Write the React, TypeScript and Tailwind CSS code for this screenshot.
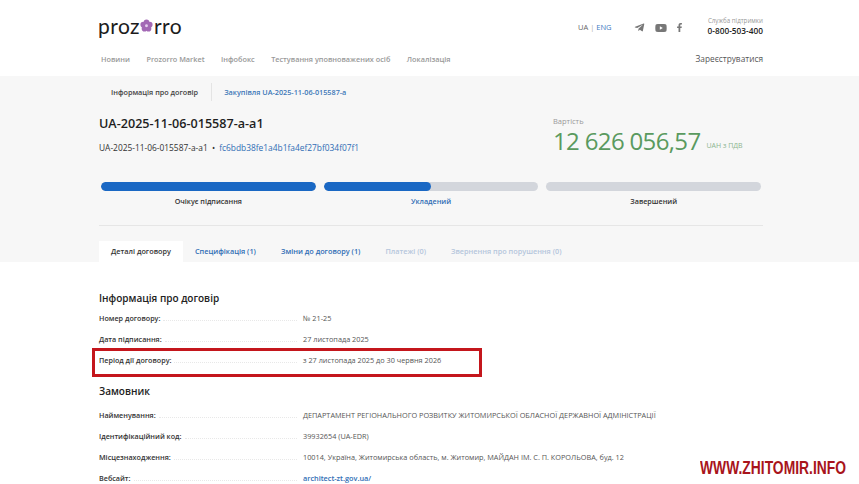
import { FaTelegramPlane, FaYoutube, FaFacebookF } from "react-icons/fa";

const navItems = ["Новини", "Prozorro Market", "Інфобокс", "Тестування уповноважених осіб", "Локалізація"];

const tabs = [
  { label: "Специфікація (1)", cls: "text-[#2f6db5]" },
  { label: "Зміни до договору (1)", cls: "text-[#2f6db5]" },
  { label: "Платежі (0)", cls: "text-[#b5c6dc]" },
  { label: "Звернення про порушення (0)", cls: "text-[#b5c6dc]" },
];

const stages = [
  { label: "Очікує підписання", fill: "w-full", cls: "text-[#333]" },
  { label: "Укладений", fill: "w-1/2", cls: "text-[#2f6db5]" },
  { label: "Завершений", fill: "w-0", cls: "text-[#333]" },
];

function Row({ label, value, link }: { label: string; value: string; link?: boolean }) {
  return (
    <div className="flex h-[21px] items-center">
      <div className="flex w-[204px] items-center pr-[6px] text-[7.2px]">
        <span className="whitespace-nowrap font-semibold text-[#333]">{label}</span>
        <span className="ml-[3px] mt-[5px] flex-1 border-b border-dotted border-[#e8e8e8]" />
      </div>
      <span className={link ? "text-[7.3px] font-semibold text-[#2f6db5]" : "whitespace-nowrap text-[7.3px] text-[#555]"}>{value}</span>
    </div>
  );
}

function Flower() {
  return (
    <svg width="13" height="13" viewBox="0 0 24 24" className="mx-[0.5px]">
      <g fill="#a368b5">
        <circle cx="12" cy="6" r="5.2" />
        <circle cx="18" cy="10.5" r="5.2" />
        <circle cx="15.7" cy="18" r="5.2" />
        <circle cx="8.3" cy="18" r="5.2" />
        <circle cx="6" cy="10.5" r="5.2" />
      </g>
      <circle cx="12" cy="12.5" r="2.6" fill="#e6cfee" />
    </svg>
  );
}

export default function App() {
  return (
    <div className="relative h-[484px] w-[859px] overflow-hidden bg-white font-['Open_Sans','Noto_Sans',sans-serif]">
      {/* шапка */}
      <header className="h-[76px] px-[96px]">
        <div className="flex h-[53px] items-center justify-between">
          <div className="flex items-center pl-[2px] pb-[3px] text-[21px] leading-none tracking-[0.45px] text-[#1c1c1c] font-['Lato','Open_Sans',sans-serif]">
            <span>proz</span>
            <Flower />
            <span>rro</span>
          </div>
          <div className="flex items-center">
            <div className="mt-[2px] w-[56px] whitespace-nowrap text-[7.5px] text-[#666]">
              UA <span className="text-[#aaa]">|</span> <span className="text-[#3f7cc4]">ENG</span>
            </div>
            <div className="mt-[2px] flex w-[73px] items-center text-[#777]">
              <FaTelegramPlane size={11} />
              <FaYoutube size={12} className="ml-[10px]" />
              <FaFacebookF size={9} className="ml-[8px]" />
            </div>
            <div className="w-[56px] whitespace-nowrap text-right">
              <div className="text-[6.2px] leading-[8px] text-[#999]">Служба підтримки</div>
              <div className="text-[8.3px] font-semibold leading-[11px] text-[#222]">0-800-503-400</div>
            </div>
          </div>
        </div>
        <div className="flex items-center justify-between">
          <nav className="flex gap-[16.5px] pl-[5px] text-[7.3px] font-semibold text-[#999]">
            {navItems.map((n) => (
              <span key={n} className="whitespace-nowrap">{n}</span>
            ))}
          </nav>
          <span className="text-[8.3px] text-[#555]">Зареєструватися</span>
        </div>
      </header>

      {/* верхня сіра секція */}
      <section className="h-[186px] bg-[#f7f7f7] pl-[99px] pr-[96px]">
        <div className="flex h-[32px] items-center text-[7.25px] font-semibold">
          <span className="pl-[12px] text-[#444]">Інформація про договір</span>
          <span className="ml-[13px] h-[18px] w-px bg-[#e4e4e4]" />
          <span className="ml-[12px] text-[#3d78b8]">Закупівля UA-2025-11-06-015587-a</span>
        </div>
        <div className="flex">
          <div className="w-[454px]">
            <h1 className="mt-[7px] text-[12.6px] font-semibold leading-[18px] text-[#1f1f1f]">UA-2025-11-06-015587-a-a1</h1>
            <p className="mt-[9px] whitespace-nowrap text-[8.4px] leading-[12px] text-[#333]">
              UA-2025-11-06-015587-a-a1 <span className="mx-[2px]">•</span>{" "}
              <span className="text-[#2f6db5]">fc6bdb38fe1a4b1fa4ef27bf034f07f1</span>
            </p>
          </div>
          <div className="whitespace-nowrap">
            <div className="mt-[8px] text-[7.5px] leading-[10px] text-[#999]">Вартість</div>
            <div className="flex items-end">
              <span className="text-[24px] leading-[30px] tracking-[-0.65px] text-[#5a9a5f]">12 626 056,57</span>
              <span className="mb-[5px] ml-[6px] text-[7px] leading-[10px] text-[#8cb58f]">UAH з ПДВ</span>
            </div>
          </div>
        </div>
        <div className="mt-[26px] grid grid-cols-3 gap-[8px] px-[2px]">
          {stages.map((s) => (
            <div key={s.label} className="flex flex-col items-center">
              <div className="h-[9px] w-full overflow-hidden rounded-full bg-[#d3d6dc]">
                <div className={`h-full rounded-full bg-[#1a68c4] ${s.fill}`} />
              </div>
              <span className={`mt-[4px] text-[7.2px] font-semibold leading-[12px] ${s.cls}`}>{s.label}</span>
            </div>
          ))}
        </div>
        <div className="mt-[18px] h-px bg-[#e6e6e6]" />
        <div className="mt-[15px] flex items-stretch text-[7.3px] font-semibold">
          <div className="flex h-[21px] w-[84px] items-center justify-center bg-white text-[#333]">Деталі договору</div>
          {tabs.map((t, i) => (
            <div key={t.label} className={`flex h-[21px] items-center whitespace-nowrap ${i === 0 ? "ml-[12px]" : "ml-[25px]"} ${t.cls}`}>
              {t.label}
            </div>
          ))}
        </div>
      </section>

      {/* деталі */}
      <section className="px-[99px]">
        <h2 className="mt-[29px] text-[10px] font-semibold leading-[14px] text-[#222]">Інформація про договір</h2>
        <div className="mt-[3px]">
          <Row label="Номер договору:" value="№ 21-25" />
          <Row label="Дата підписання:" value="27 листопада 2025" />
          <Row label="Період дії договору:" value="з 27 листопада 2025 до 30 червня 2026" />
        </div>
        <h2 className="mt-[13px] text-[10px] font-semibold leading-[14px] text-[#222]">Замовник</h2>
        <div className="mt-[7px]">
          <Row label="Найменування:" value="ДЕПАРТАМЕНТ РЕГІОНАЛЬНОГО РОЗВИТКУ ЖИТОМИРСЬКОЇ ОБЛАСНОЇ ДЕРЖАВНОЇ АДМІНІСТРАЦІЇ" />
          <Row label="Ідентифікаційний код:" value="39932654 (UA-EDR)" />
          <Row label="Місцезнаходження:" value="10014, Україна, Житомирська область, м. Житомир, МАЙДАН ІМ. С. П. КОРОЛЬОВА, буд. 12" />
          <Row label="Вебсайт:" value="architect-zt.gov.ua/" link />
        </div>
      </section>

      {/* червона рамка поверх сторінки */}
      <div className="absolute left-[92px] top-[348px] h-[29px] w-[390px] border-[3px] border-[#c4161c]" />
      {/* водяний знак */}
      <div className="absolute left-[700px] top-[458px] origin-left scale-x-[0.77] whitespace-nowrap font-['Liberation_Sans',sans-serif] text-[18px] font-bold leading-[20px] text-[#a8141b]">
        WWW.ZHITOMIR.INFO
      </div>
    </div>
  );
}
